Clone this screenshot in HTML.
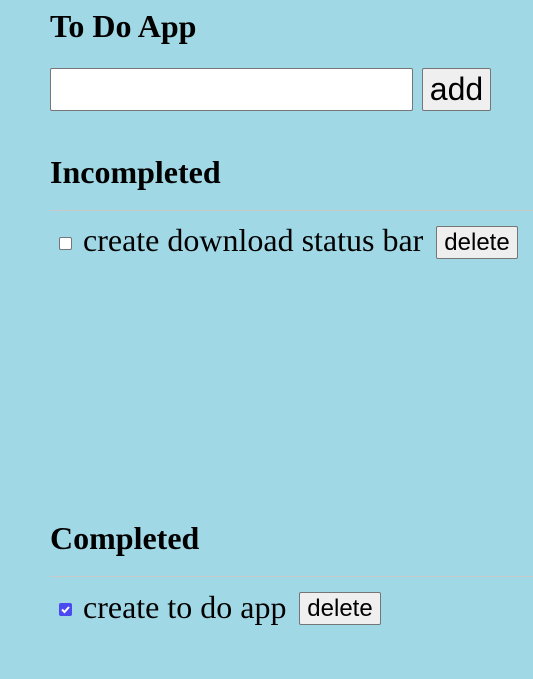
<!DOCTYPE html>
<html><head><style>
body{margin:0;background:#a0d8e6;width:533px;height:679px;overflow:hidden;position:relative;font-family:"Liberation Serif",serif;}
.a{position:absolute;}
h{position:absolute;font-weight:bold;font-size:32px;line-height:1;color:#000;}
.hr{position:absolute;left:50px;width:483px;height:0;border-top:1px solid #c8c8c8;}
.btn{position:absolute;background:#efefef;border:1px solid #767676;border-radius:2px;box-sizing:border-box;font-family:"Liberation Sans",sans-serif;color:#000;text-align:center;}
.t{position:absolute;font-size:32px;line-height:1;color:#000;white-space:nowrap;}
.cb{position:absolute;width:13px;height:13px;box-sizing:border-box;border-radius:2px;}
</style></head><body>
<h style="left:50px;top:10px">To Do App</h>
<div class="a" style="left:50px;top:68px;width:363px;height:43px;background:#fff;border:1px solid #767676;box-sizing:border-box;border-radius:2px"></div>
<div class="btn" style="left:422px;top:68px;width:69px;height:43px;font-size:32px;line-height:41px">add</div>
<h style="left:50px;top:156px">Incompleted</h>
<div class="hr" style="top:210px"></div>
<div class="cb" style="left:59px;top:237px;background:#fff;border:1px solid #767676"></div>
<div class="t" style="left:83px;top:224px">create download status bar</div>
<div class="btn" style="left:436px;top:226px;width:82px;height:33px;font-size:24px;line-height:31px">delete</div>
<h style="left:50px;top:522px">Completed</h>
<div class="hr" style="top:576px"></div>
<div class="cb" style="left:59px;top:603px;background:#4a4af0">
<svg width="13" height="13" style="position:absolute;left:0;top:0"><path d="M3 6.5l2.5 2.5 4.5-5" stroke="#fff" stroke-width="2" fill="none"/></svg></div>
<div class="t" style="left:83px;top:591px">create to do app</div>
<div class="btn" style="left:299px;top:592px;width:82px;height:33px;font-size:24px;line-height:31px">delete</div>
</body></html>
